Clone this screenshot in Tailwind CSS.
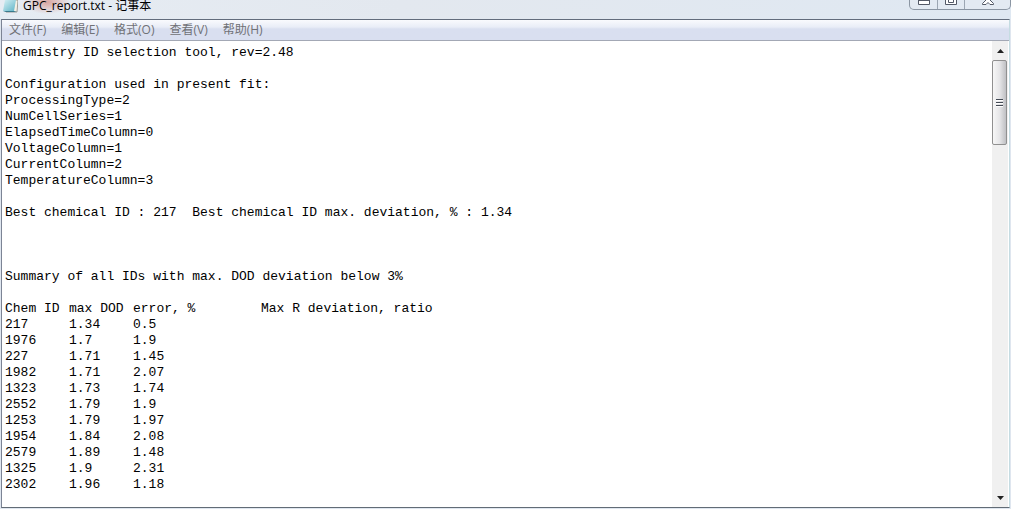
<!DOCTYPE html>
<html lang="zh-CN">
<head>
<meta charset="utf-8">
<title>GPC_report.txt - 记事本</title>
<script src="https://cdn.jsdelivr.net/npm/@tailwindcss/browser@4"></script>
</head>
<body class="h-screen overflow-hidden bg-[#dfe6ef] font-['Open_Sans','Noto_Sans_CJK_SC',sans-serif] text-[12px] text-black">
<div class="flex h-full flex-col">
  <header class="flex h-[19px] shrink-0 items-start justify-between bg-linear-to-r from-[#e6ecf3] via-[#e3e8ef] via-40% to-[#dfe8f2] pl-[3px]">
    <div class="flex h-full grow items-start gap-[5px] bg-[radial-gradient(ellipse_24px_12px_at_44px_2px,#d9a5a0,transparent)]">
      <svg class="h-[13px] w-[15px]" viewBox="0 0 15 13" aria-hidden="true">
        <defs><linearGradient id="note" x1="0" y1="0" x2="1" y2="1"><stop offset="0" stop-color="#d5f0f4"/><stop offset="1" stop-color="#62b5c8"/></linearGradient></defs>
        <path d="M3 0H15L14 12H3Z" fill="#f4f0e5" stroke="#8c8980" stroke-width=".8"/>
        <path d="M2 0H13L11 11H0Z" fill="url(#note)"/>
        <path d="M0 11H11L14 12H3Z" fill="#39798c"/>
      </svg>
      <h1 class="text-[12px] leading-[12px] whitespace-nowrap">GPC_report.txt - 记事本</h1>
    </div>
    <div class="flex h-[10px] overflow-hidden rounded-b-[5px] border border-t-0 border-[#8b96a3] bg-[#e3eaf2] text-[#535966]">
      <button aria-label="最小化" class="flex w-[28px] items-start justify-center border-r border-[#9ca6b2]"><svg class="h-[6px] w-[14px]" viewBox="0 0 14 6"><path d="M1.500 0V4.500H12.500V0M1 .5H13" fill="#fff" stroke="currentColor"/></svg></button>
      <button aria-label="最大化" class="flex w-[27px] items-start justify-center border-r border-[#9ca6b2]"><svg class="h-[6px] w-[14px]" viewBox="0 0 14 6"><path d="M1.500 -1V4.500H12.500V-1" fill="#fff" stroke="currentColor"/><path d="M4.500 -1V2.500H9.500V-1" fill="none" stroke="currentColor"/></svg></button>
      <button aria-label="关闭" class="flex w-[45px] items-start justify-center"><svg class="h-[6px] w-[14px]" viewBox="0 0 14 6"><path d="M4.500 -1L5 0L1.500 3.500V4.500H5L7 2.500L9 4.500H12.500V3.500L9 0L9.500 -1" fill="#fff" stroke="currentColor"/></svg></button>
    </div>
  </header>
  <main class="mr-px mb-px ml-px flex min-h-0 grow flex-col border border-t-[#626c7c] border-r-[#c5dce2] border-b-[#626c76] border-l-[#7c8495] bg-white">
    <nav aria-label="菜单" class="flex h-[21px] shrink-0 items-center gap-[15px] border-b border-[#a3a8b5] bg-linear-to-b from-[#f9fafd] from-0% via-[#e9edf7] via-35% to-[#d9dff0] to-45% pl-[7px] text-[#707176]">
      <button class="leading-[16px]">文件(F)</button>
      <button class="leading-[16px]">编辑(E)</button>
      <button class="leading-[16px]">格式(O)</button>
      <button class="leading-[16px]">查看(V)</button>
      <button class="leading-[16px]">帮助(H)</button>
    </nav>
    <div class="flex min-h-0 grow pr-px">
      <textarea aria-label="文本内容" spellcheck="false" wrap="off" class="min-w-0 grow resize-none overflow-hidden bg-white pt-[4px] pl-[3px] font-['Liberation_Mono',monospace] text-[13px] leading-[16px] text-black outline-none [tab-size:64px]">Chemistry ID selection tool, rev=2.48

Configuration used in present fit:
ProcessingType=2
NumCellSeries=1
ElapsedTimeColumn=0
VoltageColumn=1
CurrentColumn=2
TemperatureColumn=3

Best chemical ID : 217  Best chemical ID max. deviation, % : 1.34



Summary of all IDs with max. DOD deviation below 3%

Chem ID	max DOD	error, %	Max R deviation, ratio
217	1.34	0.5
1976	1.7	1.9
227	1.71	1.45
1982	1.71	2.07
1323	1.73	1.74
2552	1.79	1.9
1253	1.79	1.97
1954	1.84	2.08
2579	1.89	1.48
1325	1.9	2.31
2302	1.96	1.18
</textarea>
      <div class="flex w-[16px] shrink-0 flex-col bg-[#f0f0f0]">
        <button aria-label="向上滚动" class="flex h-[19px] shrink-0 items-center justify-center"><svg class="h-[4px] w-[7px]" viewBox="0 0 7 4"><path d="M3.500 0L7 4H0Z" fill="#222"/></svg></button>
        <button aria-label="滚动条滑块" class="mr-px flex h-[85px] shrink-0 items-center justify-center rounded-[2px] border border-[#909090] bg-linear-to-r from-[#f7f7f7] via-[#e6e6e8] to-[#bfc0c3]"><svg class="h-[8px] w-[7px]" viewBox="0 0 7 8"><path d="M0 .5H7M0 3.500H7M0 6.500H7" stroke="#444b55"/><path d="M0 1.500H7M0 4.500H7M0 7.500H7" stroke="#fff"/></svg></button>
        <div class="grow"></div>
        <button aria-label="向下滚动" class="flex h-[19px] shrink-0 items-center justify-center"><svg class="h-[4px] w-[7px]" viewBox="0 0 7 4"><path d="M0 0H7L3.500 4Z" fill="#222"/></svg></button>
      </div>
    </div>
  </main>
</div>
</body>
</html>
